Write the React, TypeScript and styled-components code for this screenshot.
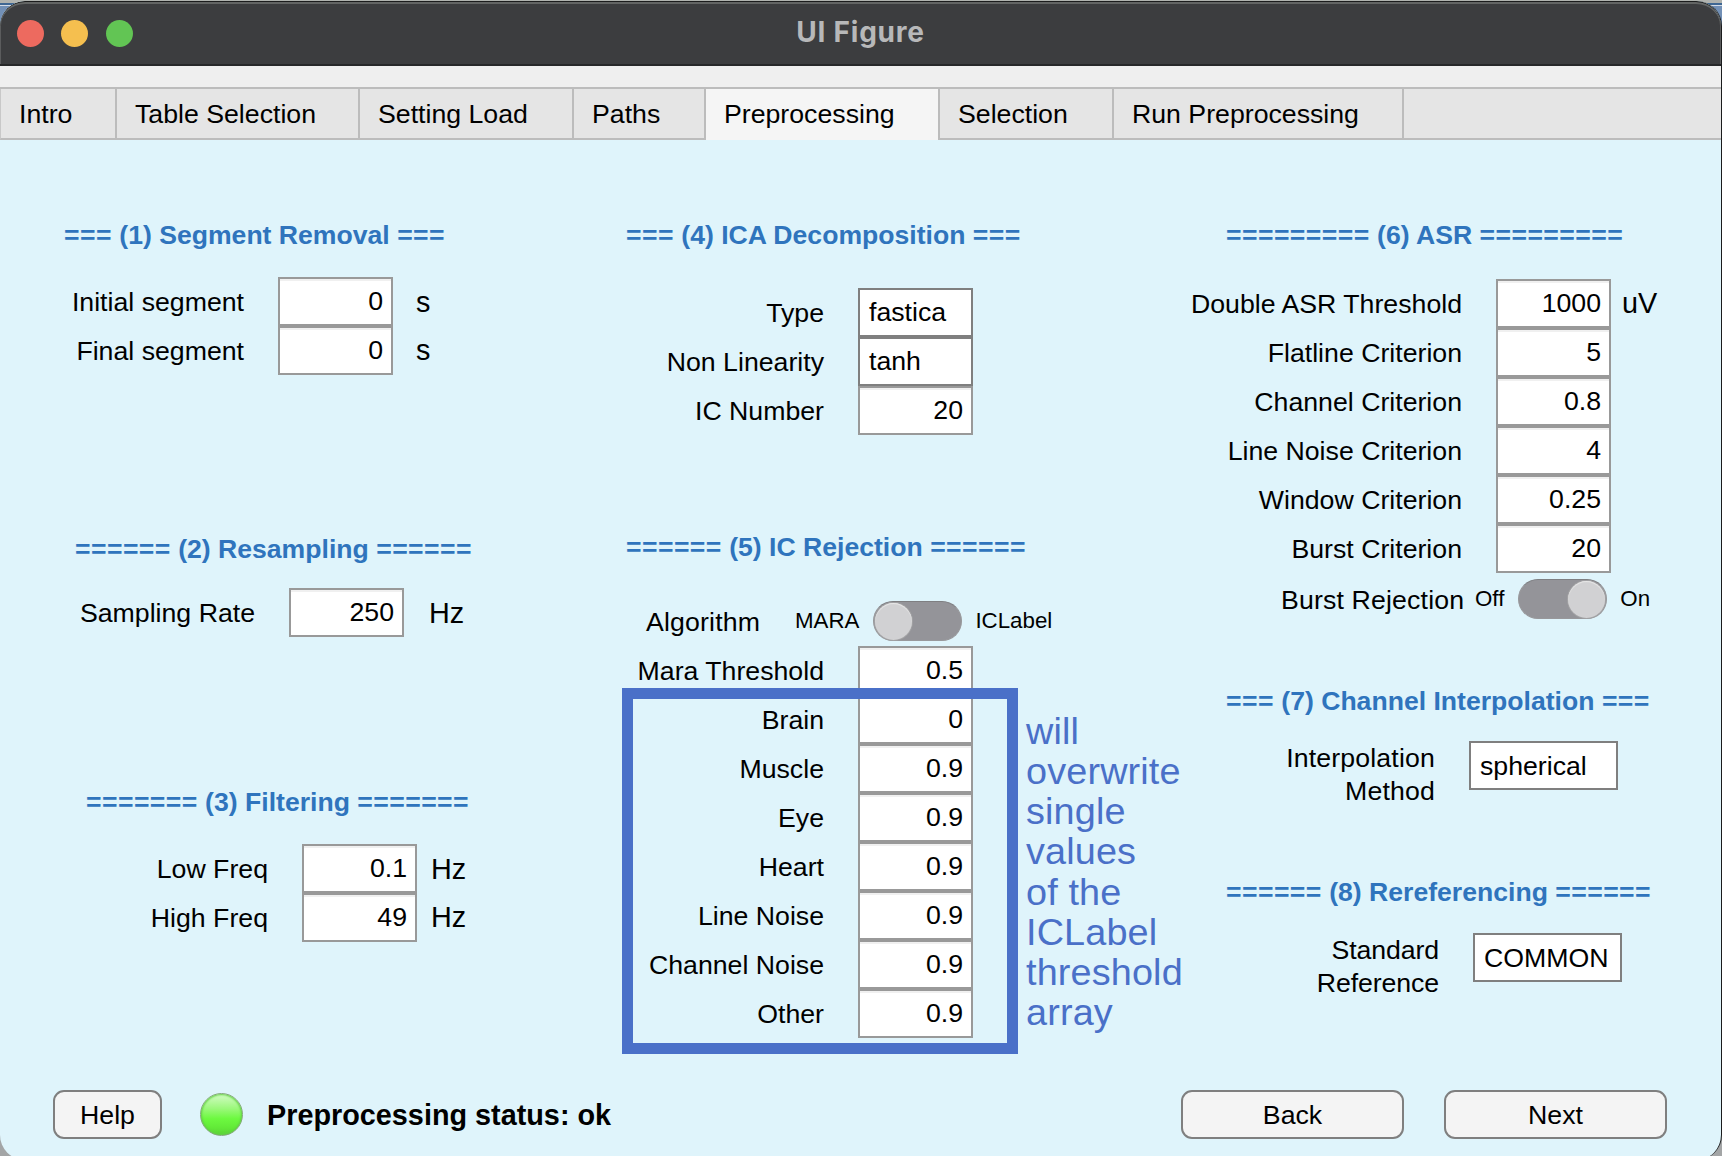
import React from "react";
import styled, { createGlobalStyle } from "styled-components";

const GlobalStyle = createGlobalStyle`
  * { box-sizing: border-box; }
  html, body { margin: 0; padding: 0; height: 1156px; overflow: hidden; }
  body {
    background: linear-gradient(to bottom, #b0b3af 0 3px, #3f6793 3px 5px, #d3dbe6 5px 6px, #7290b6 6px 40px, #a3a5a6 40px);
    font-family: "Liberation Sans", Arial, Helvetica, sans-serif;
    font-size: 26.7px;
    color: #000;
  }
`;

const Window = styled.div`
  width: 1722px;
  height: 1159px;
  margin-top: 1px;
  border-radius: 25px;
  overflow: hidden;
  display: flex;
  flex-direction: column;
  background: #dff4fb;
  border-right: 1px solid #1b1c1d;
  white-space: nowrap;
`;

const TitleBar = styled.header`
  height: 65px;
  flex: none;
  display: grid;
  grid-template-columns: 1fr auto 1fr;
  align-items: center;
  background: #3c3d3f;
  border-top: 1px solid #1b1c1c;
  border-bottom: 2px solid #272829;
  box-shadow: inset 0 2px 0 #636564, inset 1px 0 0 #5b5c5d, inset -1px 0 0 #5b5c5d;
  border-radius: 25px 25px 0 0;
`;

const Lights = styled.div`
  display: flex;
  gap: 17.7px;
  padding-left: 16.5px;
`;

const Light = styled.span<{ $color: string }>`
  width: 27px;
  height: 27px;
  border-radius: 50%;
  background: ${(p) => p.$color};
`;

const Title = styled.h1`
  margin: 0;
  padding-bottom: 2px;
  font: 700 28px/32px Inter, sans-serif;
  letter-spacing: 0.8px;
  color: #b7b8b9;
`;

const Strip = styled.div`
  height: 21px;
  flex: none;
  background: #efefef;
`;

const TabBar = styled.nav`
  height: 53px;
  flex: none;
  display: flex;
  background: #e5e5e5;
  border-top: 2px solid #bcbcbc;
`;

const Tab = styled.div<{ $w: number; $active?: boolean }>`
  width: ${(p) => p.$w}px;
  flex: none;
  padding-left: 18px;
  line-height: 51px;
  border-right: 2px solid #bcbcbc;
  border-bottom: ${(p) => (p.$active ? "none" : "2px solid #bcbcbc")};
  background: ${(p) => (p.$active ? "#f5f5f5" : "#e5e5e5")};

  &:first-child {
    padding-left: 18px;
    border-left: 1px solid #c8c8c8;
  }
`;

const TabFill = styled.div`
  flex: 1;
  border-bottom: 2px solid #bcbcbc;
`;

const Columns = styled.main`
  height: 950px;
  flex: none;
  display: grid;
  grid-template-columns: 574px 578px 569px;
  padding-top: 79px;
`;

const Column = styled.div`
  display: flex;
  flex-direction: column;
`;

const Section = styled.section<{ $h: number }>`
  height: ${(p) => p.$h}px;
  flex: none;
`;

const Heading = styled.h2<{ $left: number }>`
  margin: 0;
  padding-left: ${(p) => p.$left}px;
  height: 32px;
  line-height: 32px;
  font-size: 26.6px;
  font-weight: 700;
  color: #2f74bd;
  white-space: pre;
`;

const Rule = styled.span`
  letter-spacing: 0.43px;
`;

const Fields = styled.div<{ $top: number; $label: number }>`
  margin-top: ${(p) => p.$top}px;
  display: grid;
  grid-template-columns: ${(p) => p.$label}px auto 1fr;
  grid-auto-rows: 49px;
`;

const Label = styled.label`
  padding: 1px 34px 0 0;
  text-align: right;
  line-height: 49px;
`;

const Field = styled.div<{ $text?: boolean; $w?: number }>`
  width: ${(p) => p.$w ?? 115}px;
  height: 49px;
  padding: 0 ${(p) => (p.$text ? 9 : 8)}px;
  line-height: ${(p) => (p.$w ? 47 : 45)}px;
  text-align: ${(p) => (p.$text ? "left" : "right")};
  background: #fff;
  border: 2px solid ${(p) => (p.$text ? "#7f7f7f" : "#999")};
  box-shadow: ${(p) => (p.$text ? "none" : "inset 0 2px 0 #f0f0f0")};
`;

const Unit = styled.span<{ $gap: number; $lift?: boolean }>`
  padding-left: ${(p) => p.$gap}px;
  line-height: ${(p) => (p.$lift ? 48 : 50)}px;
  font-size: 28.8px;
`;

const SwitchRow = styled.div<{ $top: number; $left: number }>`
  margin-top: ${(p) => p.$top}px;
  padding-left: ${(p) => p.$left}px;
  height: 40px;
  display: flex;
  align-items: center;
`;

const SwitchName = styled.span<{ $w: number }>`
  width: ${(p) => p.$w}px;
  padding-top: 2px;
  line-height: 40px;
  letter-spacing: 0.15px;
`;

const Option = styled.span`
  font-size: 22.3px;
  line-height: 38px;
  padding-bottom: 1px;
`;

const Track = styled.span<{ $on?: boolean }>`
  width: 89px;
  height: 40px;
  margin: 0 13px 0 14px;
  padding: 0 1px;
  display: flex;
  align-items: center;
  justify-content: ${(p) => (p.$on ? "flex-end" : "flex-start")};
  border-radius: 20px;
  background: #949499;
  border: 1px solid #98989b;
  border-top-color: #7f7f82;
`;

const Knob = styled.span`
  width: 37px;
  height: 37px;
  border-radius: 50%;
  background: #d1d1d3;
  box-shadow: inset 0 1px 1px #e8e8e8, 0 0 0 1px #a2a2a4;
`;

const MethodRow = styled.div<{ $top: number }>`
  margin-top: ${(p) => p.$top}px;
  display: flex;
  align-items: flex-start;
`;

const MethodLabel = styled.label<{ $w: number; $track?: number }>`
  width: ${(p) => p.$w}px;
  padding: 1px 34px 0 0;
  text-align: right;
  line-height: 33.4px;
  letter-spacing: ${(p) => p.$track ?? 0}px;
`;

const Flagged = styled.div`
  position: relative;
`;

const Frame = styled.div`
  position: absolute;
  left: 48px;
  top: 42px;
  width: 396px;
  height: 366px;
  border: 11px solid #4a70c8;
`;

const Note = styled.p`
  position: absolute;
  left: 452px;
  top: 65px;
  margin: 0;
  font-size: 37.8px;
  line-height: 40.15px;
  letter-spacing: 0.15px;
  color: #4a70c8;
`;

const Footer = styled.footer`
  height: 49px;
  display: flex;
  align-items: center;
  padding-left: 53px;
`;

const Button = styled.button<{ $w: number; $gap?: number }>`
  width: ${(p) => p.$w}px;
  height: 49px;
  flex: none;
  margin: 0 0 0 ${(p) => p.$gap ?? 0}px;
  padding: 2px 0 0;
  font: inherit;
  color: #000;
  background: #f4f4f4;
  border: 2px solid #7f7f7f;
  border-radius: 11px;
`;

const Lamp = styled.span`
  width: 43px;
  height: 43px;
  flex: none;
  margin-left: 38px;
  border-radius: 50%;
  background: linear-gradient(#cdfbbd 4%, #9cf87c 35%, #6df940 60%, #62ea38 82%, #5bd136);
  border: 1.5px solid #82a878;
  box-shadow: inset 0 0 2px 1px #62d343;
`;

const Status = styled.strong`
  width: 938px;
  flex: none;
  padding: 2px 0 0 24px;
  font-size: 28.8px;
`;

const tabs: [string, number][] = [
  ["Intro", 117],
  ["Table Selection", 243],
  ["Setting Load", 214],
  ["Paths", 132],
  ["Preprocessing", 234],
  ["Selection", 174],
  ["Run Preprocessing", 290],
];

function SectionHeading({ n, name, left }: { n: number; name: string; left: number }) {
  const rule = "=".repeat(n);
  return (
    <Heading $left={left}>
      <Rule>{rule}</Rule>
      {` ${name} `}
      <Rule>{rule}</Rule>
    </Heading>
  );
}

type RowData = { label: string; value: string; text?: boolean; unit?: string; lift?: boolean };

function FieldRows({ rows, top, label, gap = 0 }: { rows: RowData[]; top: number; label: number; gap?: number }) {
  return (
    <Fields $top={top} $label={label}>
      {rows.map((r) => (
        <React.Fragment key={r.label}>
          <Label>{r.label}</Label>
          <Field $text={r.text}>{r.value}</Field>
          <Unit $gap={gap} $lift={r.lift}>{r.unit}</Unit>
        </React.Fragment>
      ))}
    </Fields>
  );
}

export default function App() {
  return (
    <>
      <GlobalStyle />
      <Window>
        <TitleBar>
          <Lights>
            <Light $color="#ed6a5f" />
            <Light $color="#f5bf4f" />
            <Light $color="#62c554" />
          </Lights>
          <Title>UI Figure</Title>
        </TitleBar>
        <Strip />
        <TabBar>
          {tabs.map(([name, w]) => (
            <Tab key={name} $w={w} $active={name === "Preprocessing"}>{name}</Tab>
          ))}
          <TabFill />
        </TabBar>
        <Columns>
          <Column>
            <Section $h={314}>
              <SectionHeading n={3} name="(1) Segment Removal" left={64} />
              <FieldRows top={26} label={278} gap={23} rows={[
                { label: "Initial segment", value: "0", unit: "s" },
                { label: "Final segment", value: "0", unit: "s", lift: true },
              ]} />
            </Section>
            <Section $h={253}>
              <SectionHeading n={6} name="(2) Resampling" left={75} />
              <FieldRows top={23} label={289} gap={25} rows={[
                { label: "Sampling Rate", value: "250", unit: "Hz" },
              ]} />
            </Section>
            <Section $h={260}>
              <SectionHeading n={7} name="(3) Filtering" left={86} />
              <FieldRows top={26} label={302} gap={14} rows={[
                { label: "Low Freq", value: "0.1", unit: "Hz" },
                { label: "High Freq", value: "49", unit: "Hz", lift: true },
              ]} />
            </Section>
          </Column>
          <Column>
            <Section $h={312}>
              <SectionHeading n={3} name="(4) ICA Decomposition" left={52} />
              <FieldRows top={37} label={284} rows={[
                { label: "Type", value: "fastica", text: true },
                { label: "Non Linearity", value: "tanh", text: true },
                { label: "IC Number", value: "20" },
              ]} />
            </Section>
            <Section $h={520}>
              <SectionHeading n={6} name="(5) IC Rejection" left={52} />
              <SwitchRow $top={38} $left={72}>
                <SwitchName $w={149}>Algorithm</SwitchName>
                <Option>MARA</Option>
                <Track><Knob /></Track>
                <Option>ICLabel</Option>
              </SwitchRow>
              <Flagged>
                <FieldRows top={5} label={284} rows={[
                  { label: "Mara Threshold", value: "0.5" },
                  { label: "Brain", value: "0" },
                  { label: "Muscle", value: "0.9" },
                  { label: "Eye", value: "0.9" },
                  { label: "Heart", value: "0.9" },
                  { label: "Line Noise", value: "0.9" },
                  { label: "Channel Noise", value: "0.9" },
                  { label: "Other", value: "0.9" },
                ]} />
                <Frame />
                <Note>
                  will<br />overwrite<br />single<br />values<br />of the<br />ICLabel<br />threshold<br />array
                </Note>
              </Flagged>
            </Section>
          </Column>
          <Column>
            <Section $h={466}>
              <SectionHeading n={9} name="(6) ASR" left={74} />
              <FieldRows top={28} label={344} gap={11} rows={[
                { label: "Double ASR Threshold", value: "1000", unit: "uV", lift: true },
                { label: "Flatline Criterion", value: "5" },
                { label: "Channel Criterion", value: "0.8" },
                { label: "Line Noise Criterion", value: "4" },
                { label: "Window Criterion", value: "0.25" },
                { label: "Burst Criterion", value: "20" },
              ]} />
              <SwitchRow $top={6} $left={129}>
                <SwitchName $w={194}>Burst Rejection</SwitchName>
                <Option>Off</Option>
                <Track $on><Knob /></Track>
                <Option>On</Option>
              </SwitchRow>
            </Section>
            <Section $h={191}>
              <SectionHeading n={3} name="(7) Channel Interpolation" left={74} />
              <MethodRow $top={24}>
                <MethodLabel $w={317} $track={0.15}>Interpolation<br />Method</MethodLabel>
                <Field $text $w={149}>spherical</Field>
              </MethodRow>
            </Section>
            <Section $h={150}>
              <SectionHeading n={6} name="(8) Rereferencing" left={74} />
              <MethodRow $top={25}>
                <MethodLabel $w={321} $track={-0.1}>Standard<br />Reference</MethodLabel>
                <Field $text $w={149}>COMMON</Field>
              </MethodRow>
            </Section>
          </Column>
        </Columns>
        <Footer>
          <Button $w={109}>Help</Button>
          <Lamp />
          <Status>Preprocessing status: ok</Status>
          <Button $w={223}>Back</Button>
          <Button $w={223} $gap={40}>Next</Button>
        </Footer>
      </Window>
    </>
  );
}
